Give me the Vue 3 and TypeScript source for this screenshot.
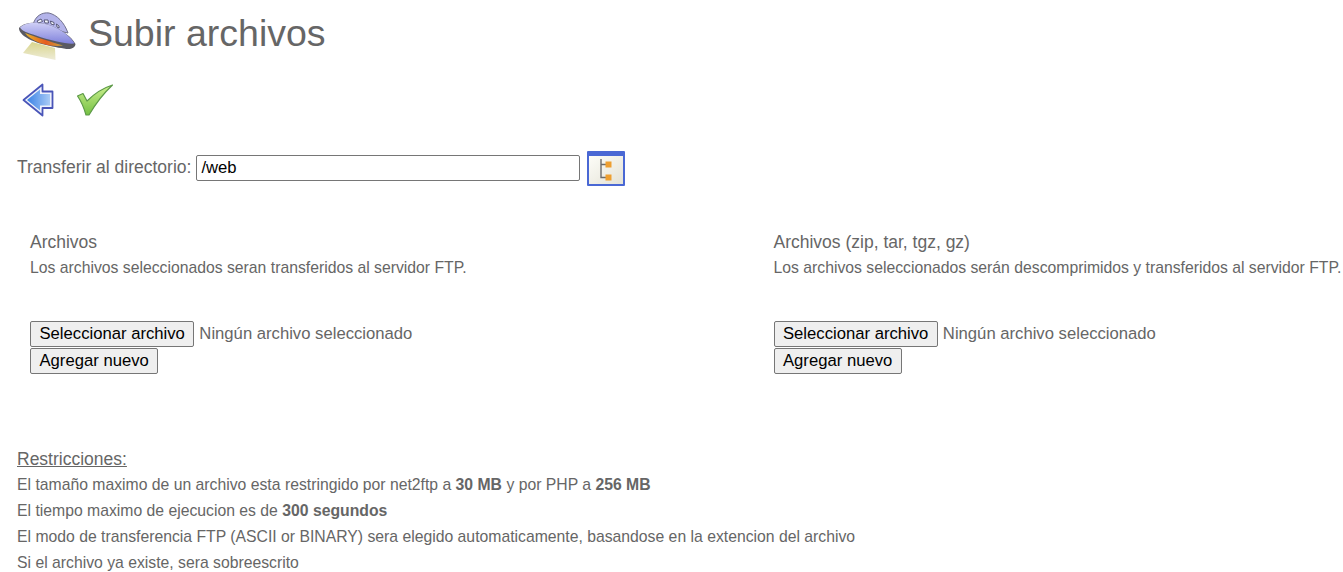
<script setup lang="ts">
const columns = [
  { title: 'Archivos', text: 'Los archivos seleccionados seran transferidos al servidor FTP.' },
  { title: 'Archivos (zip, tar, tgz, gz)', text: 'Los archivos seleccionados serán descomprimidos y transferidos al servidor FTP.' }
]
</script>

<template>
  <div class="page">
    <header class="title-row">
      <svg class="ufo" width="62" height="60" viewBox="17 3 62 60">
        <defs>
          <linearGradient id="beam" x1="0" y1="0" x2="0" y2="1">
            <stop offset="0" stop-color="#d9d58c" />
            <stop offset="1" stop-color="#eeecd8" />
          </linearGradient>
          <linearGradient id="hull" x1="0" y1="0" x2="0" y2="1">
            <stop offset="0" stop-color="#cfcff6" />
            <stop offset="1" stop-color="#8082dc" />
          </linearGradient>
          <linearGradient id="glow" x1="0" y1="0" x2="1" y2="0">
            <stop offset="0" stop-color="#e8b428" />
            <stop offset="0.55" stop-color="#e65c20" />
            <stop offset="1" stop-color="#c8a840" />
          </linearGradient>
          <filter id="soft"><feGaussianBlur stdDeviation="0.35" /></filter>
        </defs>
        <g filter="url(#soft)">
          <path d="M32 42 L55 48 L55.500 60 L23 53 Z" fill="url(#beam)" />
          <path d="M33 25 C35 16 42 12 49 13 C57 15 64 22 68 33 Z" fill="#b4b4ea" stroke="#70708c" stroke-width="1" />
          <path d="M19 28 C24 22 38 21 52 26 C62 30 72 37 75.500 44 C75 48.500 70 50 64 48.500 C50 46.500 28 42 21 33 C19.500 31 19 30 19 28 Z" fill="#5a5a62" />
          <path d="M20 27.500 C25 22 38 21 52 26 C62 30 71 37 74.500 43.500 C68 44.500 50 40.500 36 35.500 C28 33 22 31 20 27.500 Z" fill="url(#hull)" />
          <path d="M25 33 C35 37 50 41.500 63 45.500 C52 47.500 32 43 25 33 Z" fill="url(#glow)" />
          <path d="M37 21 L41 19 L42.500 21.500 L38.500 23 Z M44 20 L48 20 L48.500 23 L45 23 Z M50.500 21 L54 22.500 L54 25 L51 24 Z M56.500 24 L59 26 L59 28 L57 27 Z" fill="#f4f6ff" stroke="#3c3c5c" stroke-width="0.800" />
        </g>
      </svg>
      <h1>Subir archivos</h1>
    </header>

    <nav class="actions">
      <svg width="34" height="34" viewBox="21 83 34 34">
        <defs>
          <linearGradient id="arrow" x1="0" y1="0" x2="1" y2="0">
            <stop offset="0" stop-color="#3a82e6" />
            <stop offset="1" stop-color="#a9cbf6" />
          </linearGradient>
        </defs>
        <g filter="url(#soft)">
          <path d="M23.500 100 L42.500 84.500 L42.500 91.500 L52.500 91.500 L52.500 108 L42.500 108 L42.500 115.500 Z" fill="#eef2fc" stroke="#4a55b8" stroke-width="1.800" stroke-linejoin="round" />
          <path d="M27 100 L40 89.500 L40 94 L50 94 L50 105.500 L40 105.500 L40 110.500 Z" fill="url(#arrow)" />
        </g>
      </svg>
      <svg width="38" height="34" viewBox="0 0 38 34">
        <defs>
          <linearGradient id="check" x1="0" y1="0" x2="0" y2="1">
            <stop offset="0" stop-color="#cdf08e" />
            <stop offset="1" stop-color="#74c044" />
          </linearGradient>
        </defs>
        <g filter="url(#soft)">
          <path d="M1.500 13 L7 10.500 L11 18 C18 11 27 5 36.500 2 C28 10 20 20 13 32 L10 32 C8 25 5 18 1.500 13 Z" fill="url(#check)" stroke="#5d9a48" stroke-width="1.200" stroke-linejoin="round" />
        </g>
      </svg>
    </nav>

    <div class="directory">
      <label for="directory">Transferir al directorio:</label>
      <input id="directory" type="text" value="/web" />
      <button class="tree" type="button" aria-label="Elegir directorio">
        <svg width="38" height="35" viewBox="587 151 38 35">
          <defs>
            <linearGradient id="pane" x1="0" y1="0" x2="1" y2="1">
              <stop offset="0" stop-color="#fdfdf8" />
              <stop offset="1" stop-color="#e4e2d6" />
            </linearGradient>
          </defs>
          <rect x="587" y="151" width="38" height="35" rx="1" fill="#4a68d4" />
          <rect x="589" y="156" width="34" height="28" fill="url(#pane)" />
          <path d="M601 159 V177.500 H606 M601 164.500 H606" fill="none" stroke="#6c6c6c" stroke-width="1.400" />
          <rect x="605.500" y="161.500" width="6" height="6" fill="#ee9f30" />
          <rect x="605.500" y="174.500" width="6" height="6" fill="#ee9f30" />
        </svg>
      </button>
    </div>

    <section class="columns">
      <div v-for="col in columns" :key="col.title" class="column">
        <h2>{{ col.title }}</h2>
        <p class="hint">{{ col.text }}</p>
        <div class="file-row">
          <button type="button">Seleccionar archivo</button>
          <span>Ningún archivo seleccionado</span>
        </div>
        <button type="button" class="add">Agregar nuevo</button>
      </div>
    </section>

    <section class="limits">
      <u>Restricciones:</u>
      <p>El tamaño maximo de un archivo esta restringido por net2ftp a <b>30 MB</b> y por PHP a <b>256 MB</b></p>
      <p>El tiempo maximo de ejecucion es de <b>300 segundos</b></p>
      <p>El modo de transferencia FTP (ASCII or BINARY) sera elegido automaticamente, basandose en la extencion del archivo</p>
      <p>Si el archivo ya existe, sera sobreescrito</p>
    </section>
  </div>
</template>

<style>
html, body {
  background: #fff;
  overflow: hidden;
}
</style>

<style scoped>
.page {
  width: 1343px;
  height: 572px;
  overflow: hidden;
  box-sizing: border-box;
  padding: 0 0 0 17px;
  font-family: "Liberation Sans", Arial, sans-serif;
  color: #666;
  font-size: 17.5px;
}

.title-row {
  display: flex;
  align-items: center;
  height: 66px;
  gap: 9px;
}

.ufo {
  flex: none;
}

h1 {
  margin: 0;
  font-size: 37.5px;
  font-weight: 400;
}

.actions {
  display: flex;
  gap: 21px;
  padding: 17px 0 0 4px;
  height: 34px;
}

.directory {
  display: flex;
  align-items: flex-start;
  gap: 5px;
  margin-top: 34px;
  height: 35px;
}

.directory label {
  margin-top: 6px;
}

.directory input {
  box-sizing: border-box;
  width: 384px;
  height: 26px;
  margin-top: 4px;
  padding: 1px 4px;
  border: 1px solid #767676;
  border-radius: 2px;
  font: 16.67px "Liberation Sans", Arial, sans-serif;
  color: #000;
  outline: none;
}

.tree {
  padding: 0;
  margin-left: 2px;
  border: 0;
  background: none;
  height: 35px;
}

.columns {
  display: flex;
  margin-top: 46px;
  padding-left: 13px;
}

.column {
  width: 743.5px;
  flex: none;
}

h2 {
  margin: 0;
  font-size: 17.5px;
  font-weight: 400;
  line-height: 20px;
}

.hint {
  margin: 6px 0 0;
  font-size: 15.75px;
  line-height: 20px;
  white-space: nowrap;
}

.file-row {
  display: flex;
  align-items: center;
  gap: 5px;
  margin-top: 43px;
  font-size: 16.67px;
}

button:not(.tree) {
  box-sizing: border-box;
  height: 26px;
  padding: 1px 8.5px;
  border: 1px solid #767676;
  border-radius: 2px;
  background: #efefef;
  color: #000;
  font: 16.67px "Liberation Sans", Arial, sans-serif;
}

.add {
  display: block;
  margin-top: 1px;
}

.limits {
  margin-top: 75px;
  line-height: 20px;
}

.limits p {
  margin: 0;
  font-size: 15.75px;
  line-height: 26px;
}

.limits p:first-of-type {
  margin-top: 3px;
}
</style>
